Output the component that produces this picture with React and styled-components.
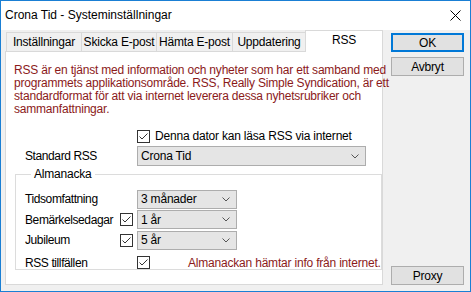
import React from "react";
import styled, { createGlobalStyle, css } from "styled-components";

const Global = createGlobalStyle`
  html, body { margin: 0; padding: 0; background: #ffffff; }
  body { font-family: "Liberation Sans", Arial, sans-serif; font-size: 12px; color: #000; }
  * { box-sizing: border-box; }
`;

const Window = styled.div`
  width: 471px;
  height: 292px;
  border: 1px solid #1a7fd4;
  background: #f0f0f0;
  display: flex;
  flex-direction: column;
`;

const TitleBar = styled.div`
  height: 29px;
  flex: none;
  background: #ffffff;
  display: flex;
  align-items: center;
  justify-content: space-between;
  padding: 0 9px 1px 4px;
  font-size: 12px;
`;

const Body = styled.div`
  flex: 1;
  display: flex;
  padding: 1px 6px 6px 4px;
  gap: 8px;
  letter-spacing: -0.2px;
`;

const LeftCol = styled.div`
  width: 378px;
  display: flex;
  flex-direction: column;
`;

const TabStrip = styled.div`
  height: 21px;
  display: flex;
  align-items: flex-end;
  padding-left: 1px;
  position: relative;
  z-index: 1;
  margin-bottom: -1px;
`;

const Tab = styled.div`
  width: ${(p) => p.$w}px;
  height: ${(p) => (p.$active ? 22 : 20)}px;
  margin-left: -1px;
  border: 1px solid #d9d9d9;
  border-bottom: ${(p) => (p.$active ? "none" : "1px solid #d9d9d9")};
  background: ${(p) => (p.$active ? "#ffffff" : "#f0f0f0")};
  display: flex;
  align-items: center;
  justify-content: center;
  padding-bottom: ${(p) => (p.$active ? 4 : 1)}px;
  white-space: nowrap;
  &:first-child { margin-left: 0; }
`;

const Panel = styled.div`
  flex: 1;
  background: #ffffff;
  border: 1px solid #d9d9d9;
  display: flex;
  flex-direction: column;
  padding: 12px 0 0 0;
`;

const Info = styled.div`
  color: #8b1a1a;
  line-height: 13px;
  padding-left: 8px;
  white-space: nowrap;
`;

const Row = styled.div`
  display: flex;
  align-items: center;
  height: ${(p) => p.$h || 20}px;
  margin-top: ${(p) => p.$mt || 0}px;
`;

const Label = styled.div`
  width: ${(p) => p.$w}px;
  flex: none;
  white-space: nowrap;
  letter-spacing: -0.4px;
`;

const Spacer = styled.div`
  width: ${(p) => p.$w}px;
  flex: none;
`;

const CheckText = styled.span`
  margin-left: 5px;
  white-space: nowrap;
`;

const Box = styled.span`
  width: 13px;
  height: 13px;
  flex: none;
  border: 1px solid #333333;
  background: #ffffff;
  display: inline-flex;
  align-items: center;
  justify-content: center;
`;

const Check = () => (
  <Box>
    <svg width="11" height="11" viewBox="0 0 11 11">
      <path d="M1.5 5.5 L4 8 L9.5 2.5" fill="none" stroke="#333" strokeWidth="1" />
    </svg>
  </Box>
);

const Combo = styled.div`
  width: ${(p) => p.$w}px;
  height: ${(p) => p.$h || 20}px;
  flex: none;
  background: #e5e5e5;
  border: 1px solid #adadad;
  display: flex;
  align-items: center;
  justify-content: space-between;
  padding: 0 6px 0 3px;
  white-space: nowrap;
`;

const Chevron = () => (
  <svg width="8" height="5" viewBox="0 0 8 5">
    <path d="M0.5 0.5 L4 4 L7.5 0.5" fill="none" stroke="#555" strokeWidth="1" />
  </svg>
);

const Group = styled.fieldset`
  margin: 2px 0 0 9px;
  width: 360px;
  border: 1px solid #dcdcdc;
  padding: 8px 0 0 9px;
  height: 102px;
`;

const Legend = styled.legend`
  padding: 0 3px;
  margin-left: 6px;
  line-height: 13px;
`;

const GroupRows = styled.div`
  display: flex;
  flex-direction: column;
`;

const Note = styled.span`
  color: #8b1a1a;
  margin-left: 38px;
  white-space: nowrap;
`;

const RightCol = styled.div`
  width: 73px;
  display: flex;
  flex-direction: column;
  padding-top: 2px;
`;

const Button = styled.div`
  height: 19px;
  background: #e1e1e1;
  border: 1px solid #adadad;
  display: flex;
  align-items: center;
  justify-content: center;
  margin-bottom: 5px;
  ${(p) =>
    p.$default &&
    css`
      border: 2px solid #0078d7;
    `}
  ${(p) =>
    p.$bottom &&
    css`
      margin-top: auto;
      margin-bottom: 0;
    `}
`;

const tabs = [
  ["Inställningar", 76],
  ["Skicka E-post", 76],
  ["Hämta E-post", 77],
  ["Uppdatering", 74],
  ["RSS", 78, true],
];

export default function App() {
  return (
    <>
      <Global />
      <Window>
        <TitleBar>
          <span>Crona Tid - Systeminställningar</span>
          <svg width="11" height="11" viewBox="0 0 11 11">
            <path d="M0.5 0.5 L10.5 10.5 M10.5 0.5 L0.5 10.5" stroke="#000" strokeWidth="1" />
          </svg>
        </TitleBar>
        <Body>
          <LeftCol>
            <TabStrip>
              {tabs.map(([t, w, a]) => (
                <Tab key={t} $w={w} $active={a}>
                  {t}
                </Tab>
              ))}
            </TabStrip>
            <Panel>
              <Info>
                RSS är en tjänst med information och nyheter som har ett samband med
                <br />
                programmets applikationsområde. RSS, Really Simple Syndication, är ett
                <br />
                standardformat för att via internet leverera dessa nyhetsrubriker och
                <br />
                sammanfattningar.
              </Info>
              <Row $mt={12} $h={16}>
                <Spacer $w={131} />
                <Check />
                <CheckText>Denna dator kan läsa RSS via internet</CheckText>
              </Row>
              <Row $mt={2}>
                <Spacer $w={19} />
                <Label $w={112}>Standard RSS</Label>
                <Combo $w={229}>
                  <span>Crona Tid</span>
                  <Chevron />
                </Combo>
              </Row>
              <Group>
                <Legend>Almanacka</Legend>
                <GroupRows>
                  <Row $h={20.5}>
                    <Label $w={112}>Tidsomfattning</Label>
                    <Combo $w={100} $h={19}>
                      <span>3 månader</span>
                      <Chevron />
                    </Combo>
                  </Row>
                  <Row $h={20.5}>
                    <Label $w={95}>Bemärkelsedagar</Label>
                    <Check />
                    <Spacer $w={4} />
                    <Combo $w={100} $h={19}>
                      <span>1 år</span>
                      <Chevron />
                    </Combo>
                  </Row>
                  <Row $h={20.5}>
                    <Label $w={95}>Jubileum</Label>
                    <Check />
                    <Spacer $w={4} />
                    <Combo $w={100} $h={19}>
                      <span>5 år</span>
                      <Chevron />
                    </Combo>
                  </Row>
                  <Row $mt={2}>
                    <Label $w={112}>RSS tillfällen</Label>
                    <Check />
                    <Note>Almanackan hämtar info från internet.</Note>
                  </Row>
                </GroupRows>
              </Group>
            </Panel>
          </LeftCol>
          <RightCol>
            <Button $default>OK</Button>
            <Button>Avbryt</Button>
            <Button $bottom>Proxy</Button>
          </RightCol>
        </Body>
      </Window>
    </>
  );
}
